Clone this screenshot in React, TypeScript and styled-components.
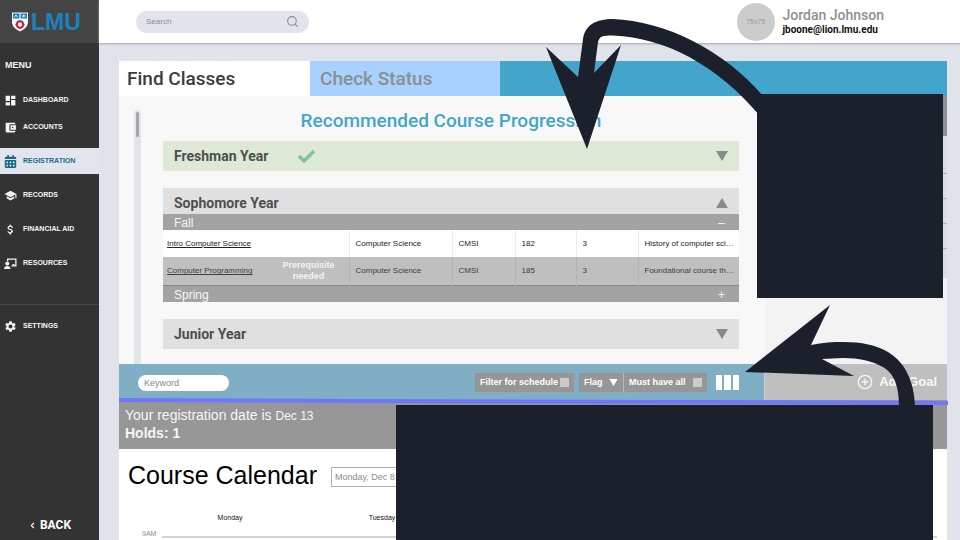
import React, { useState } from "react";
import styled, { createGlobalStyle } from "styled-components";
import { Search, CirclePlus, ChevronLeft } from "lucide-react";
import {
  MdDashboard,
  MdAccountBalanceWallet,
  MdSchool,
  MdAttachMoney,
  MdSettings,
} from "react-icons/md";
import { FaCalendarAlt } from "react-icons/fa";

const sans = '"Liberation Sans", Arial, sans-serif';
const heading = 'Roboto, "Liberation Sans", sans-serif';
const ink = "#1b202c";

const GlobalStyle = createGlobalStyle`
  *, *::before, *::after { box-sizing: border-box; }
  body { margin: 0; font-family: ${sans}; background: #e0e4ea; overflow: hidden; }
  button, input, select { font-family: inherit; margin: 0; border: 0; padding: 0; }
  button { cursor: pointer; background: none; color: inherit; }
  h1, h2, p, ul { margin: 0; padding: 0; }
  ul { list-style: none; }
`;

const Page = styled.div`
  position: relative;
  display: grid;
  grid-template-columns: 99px minmax(0, 1fr);
  height: 100vh;
  overflow: hidden;
`;

/* Sidebar */

const Sidebar = styled.aside`
  display: flex;
  flex-direction: column;
  background: #333333;
  color: #f2f2f2;
`;

const Brand = styled.a`
  display: flex;
  align-items: center;
  gap: 2px;
  height: 43px;
  padding-left: 11px;
  background: #444444;
  color: #1c81bd;
  font-size: 23px;
  line-height: 24px;
  font-weight: 700;
  text-decoration: none;
`;

const MenuLabel = styled.p`
  padding: 16px 5px;
  font-size: 9px;
  line-height: 12px;
  font-weight: 700;
`;

const NavGroup = styled.ul`
  display: flex;
  flex-direction: column;
  gap: ${(p: { $gap: number }) => p.$gap}px;
  margin-bottom: 8px;
`;

const NavLink = styled.a<{ $active?: boolean }>`
  display: flex;
  align-items: center;
  gap: 6px;
  height: 26px;
  padding-left: 4px;
  background: ${(p) => (p.$active ? "#e2e6ec" : "transparent")};
  color: ${(p) => (p.$active ? "#176a8c" : "#f5f5f5")};
  font-size: 7px;
  line-height: 10px;
  font-weight: 700;
  text-decoration: none;
  white-space: nowrap;
  svg { width: 13px; height: 13px; flex: none; }
`;

const NavDivider = styled.hr`
  width: 100%;
  height: 1px;
  margin: 28px 0 8px;
  border: 0;
  background: #484848;
`;

const BackLink = styled.a`
  display: flex;
  align-items: center;
  justify-content: center;
  gap: 3px;
  margin-top: auto;
  padding-bottom: 8px;
  color: #ffffff;
  font-family: ${heading};
  font-size: 12px;
  line-height: 14px;
  font-weight: 700;
  text-decoration: none;
`;

/* Top bar */

const Content = styled.div`
  display: flex;
  flex-direction: column;
  min-width: 0;
  min-height: 0;
`;

const TopBar = styled.header`
  display: flex;
  flex: none;
  align-items: center;
  justify-content: space-between;
  height: 43px;
  padding: 0 76px 0 37px;
  background: #ffffff;
  box-shadow: 0 1px 2px #a3a5a9;
`;

const SearchBox = styled.label`
  display: flex;
  align-items: center;
  width: 173px;
  height: 22px;
  padding: 0 10px;
  border-radius: 11px;
  background: #e1e4ea;
  color: #8b8d91;
`;

const SearchInput = styled.input`
  flex: 1;
  min-width: 0;
  background: transparent;
  font-size: 8px;
  line-height: 12px;
  outline: 0;
  &::placeholder { color: #8b8d91; opacity: 1; }
`;

const Profile = styled.div`
  display: flex;
  align-items: center;
  gap: 8px;
`;

const Avatar = styled.div`
  display: grid;
  place-items: center;
  width: 38px;
  height: 38px;
  border-radius: 50%;
  background: #cccccc;
  color: #9b9b9b;
  font-size: 7px;
`;

const ProfileName = styled.p`
  color: #8d9094;
  font-family: ${heading};
  font-size: 14px;
  line-height: 16px;
  font-weight: 500;
`;

const ProfileMail = styled.p`
  color: #111111;
  font-family: ${heading};
  font-size: 10px;
  line-height: 13px;
  font-weight: 700;
`;

/* Main panel */

const Main = styled.main`
  display: flex;
  flex: 1;
  flex-direction: column;
  min-height: 0;
  padding: 18px 13px 0 20px;
`;

const Tabs = styled.div`
  display: flex;
  flex: none;
  height: 35px;
  background: #43a5cb;
`;

const Tab = styled.button<{ $selected?: boolean }>`
  width: ${(p) => (p.$selected ? 191 : 190)}px;
  padding-left: ${(p) => (p.$selected ? 8 : 10)}px;
  background: ${(p) => (p.$selected ? "#ffffff" : "#a8d1ff")};
  color: ${(p) => (p.$selected ? "#3b3b3b" : "#8a8f93")};
  font-family: ${heading};
  font-size: 19px;
  line-height: 22px;
  font-weight: 500;
  text-align: left;
`;

const Columns = styled.div`
  display: grid;
  flex: none;
  grid-template-columns: minmax(0, 1fr) 182px;
`;

const Finder = styled.section`
  display: flex;
  gap: 22px;
  height: 268px;
  padding: 14px 26px 0 15px;
  background: #f8f8f8;
`;

const ScrollTrack = styled.div`
  width: 7px;
  padding: 2px;
  border-radius: 4px 4px 0 0;
  background: #e1e5e9;
`;

const ScrollThumb = styled.div`
  height: 25px;
  border-radius: 2px;
  background: #a5a7aa;
`;

const Progression = styled.div`
  flex: 1;
  min-width: 0;
`;

const Title = styled.h1`
  margin-bottom: 9px;
  color: #43a5cb;
  font-family: ${heading};
  font-size: 19px;
  line-height: 22px;
  font-weight: 500;
  text-align: center;
`;

const Year = styled.section`
  margin-bottom: 17px;
`;

const YearHeader = styled.button<{ $done?: boolean; $open?: boolean }>`
  display: flex;
  align-items: center;
  width: 100%;
  height: ${(p) => (p.$open ? 26 : 30)}px;
  padding: ${(p) => (p.$open ? "3px 11px 0" : "0 11px")};
  background: ${(p) => (p.$done ? "#dde8d6" : "#e0e0e0")};
  color: #4d4f4e;
  font-family: ${heading};
  font-size: 14px;
  line-height: 18px;
  font-weight: 700;
  text-align: left;
  svg:last-child { margin-left: auto; }
`;

const DoneMark = styled.svg`
  margin-left: 29px;
`;

const Term = styled.button`
  display: flex;
  align-items: center;
  justify-content: space-between;
  width: 100%;
  height: 16px;
  padding: 2px 14px 0 11px;
  background: #a3a3a3;
  color: #f6f6f6;
  font-size: 12px;
  line-height: 14px;
`;

const CourseTable = styled.table`
  width: 100%;
  border-collapse: collapse;
  table-layout: fixed;
`;

const Col = styled.col<{ $w?: number }>`
  width: ${(p) => (p.$w ? `${p.$w}px` : "auto")};
`;

const CourseRow = styled.tr<{ $locked?: boolean }>`
  height: ${(p) => (p.$locked ? 28 : 27)}px;
  background: ${(p) => (p.$locked ? "#bfbfbf" : "#ffffff")};
  border-bottom: ${(p) => (p.$locked ? "1px solid #858585" : "0")};
  color: ${(p) => (p.$locked ? "#3e3e3e" : "#222222")};
  td { border-right-color: ${(p) => (p.$locked ? "#b3b3b3" : "#ededed")}; }
`;

const Cell = styled.td`
  padding: 0 0 0 6px;
  border-right: 1px solid;
  font-size: 8px;
  line-height: 11px;
  overflow: hidden;
  white-space: nowrap;
  &:first-child { padding-left: 4px; }
  &:last-child { border-right: 0; }
`;

const CourseName = styled.div`
  display: flex;
  align-items: center;
  justify-content: space-between;
  padding-right: 13px;
  a { color: inherit; }
`;

const Prerequisite = styled.span`
  width: 54px;
  color: #f7f1f3;
  font-size: 9px;
  line-height: 11px;
  font-weight: 700;
  text-align: center;
  white-space: normal;
`;

const Toolbar = styled.div`
  display: flex;
  align-items: center;
  height: 36px;
  padding: 0 25px 0 19px;
  background: #80afc5;
  border-right: 1px solid #c9cdd0;
`;

const Keyword = styled.input`
  width: 91px;
  height: 16px;
  margin: 1px auto 0 0;
  padding: 0 6px;
  border-radius: 8px;
  background: #ffffff;
  font-size: 9px;
  &::placeholder { color: #85888b; opacity: 1; }
`;

const FilterChip = styled.label`
  display: flex;
  align-items: center;
  justify-content: space-between;
  height: 19px;
  width: ${(p: { $w: number }) => p.$w}px;
  padding: 0 5px;
  background: #969696;
  color: #ffffff;
  font-size: 9px;
  line-height: 12px;
  font-weight: 700;
  white-space: nowrap;
`;

const ChipPair = styled.div`
  display: flex;
  margin: 0 9px 0 5px;
  label + label { border-left: 1px solid #b9b9b9; }
`;

const FlagSelect = styled.select`
  width: 22px;
  appearance: none;
  background: transparent;
  color: inherit;
  font-size: 9px;
  font-weight: 700;
`;

const Tick = styled.input`
  flex: none;
  appearance: none;
  width: 9px;
  height: 9px;
  margin: 0;
  background: #cbcbcb;
  &:checked { background: #ffffff; }
`;

const ColumnToggle = styled.button`
  display: flex;
  gap: 2px;
  width: 23px;
  height: 15px;
  span { flex: 1; background: #ffffff; }
`;

/* Goals */

const Goals = styled.aside`
  display: flex;
  flex-direction: column;
  background: #f3f3f3;
`;

const GoalsHead = styled.div`
  height: 40px;
  background: #8f8f8f;
`;

const GoalRow = styled.li<{ $tall?: boolean }>`
  height: ${(p) => (p.$tall ? 38 : 25)}px;
  background: #dedede;
  border-bottom: 1px solid #b3b3b3;
  &:last-child { height: 29px; border: 0; }
`;

const AddGoal = styled.button`
  display: flex;
  align-items: center;
  justify-content: flex-end;
  gap: 6px;
  height: 36px;
  padding-right: 10px;
  background: #bfbfbf;
  color: #f7f7f7;
  font-size: 13px;
  line-height: 16px;
  font-weight: 700;
`;

/* Registration status and calendar */

const Notice = styled.section`
  flex: none;
  height: 49px;
  padding: 7px 6px;
  background: #979797;
  color: #f6f6f6;
  font-size: 14px;
  line-height: 17px;
  small { font-size: 12px; }
`;

const Calendar = styled.section`
  flex: 1;
  background: #ffffff;
`;

const CalendarHead = styled.div`
  display: flex;
  align-items: center;
  gap: 14px;
  padding: 11px 9px 0;
`;

const CalendarTitle = styled.h2`
  color: #000000;
  font-size: 25px;
  line-height: 31px;
  font-weight: 400;
`;

const DateInput = styled.input`
  width: 120px;
  height: 20px;
  margin-top: 3px;
  padding: 0 3px;
  border: 1px solid #b0b0b0;
  color: #8a8a8a;
  font-size: 9px;
`;

const Days = styled.div`
  display: grid;
  grid-template-columns: repeat(5, 1fr);
  padding: 21px 33px 0 35px;
  color: #111111;
  font-size: 7px;
  line-height: 11px;
  text-align: center;
`;

const Hour = styled.div`
  display: flex;
  align-items: center;
  gap: 6px;
  padding: 6px 10px 0 23px;
  color: #8c8c8c;
  font-size: 7px;
  line-height: 10px;
  hr { flex: 1; height: 2px; margin: 5px 0 0; border: 0; background: #d2d2d2; }
`;

/* Callouts drawn over the page */

const Callout = styled.div<{ $x: number; $y: number; $w: number; $h: number }>`
  position: absolute;
  left: ${(p) => p.$x}px;
  top: ${(p) => p.$y}px;
  width: ${(p) => p.$w}px;
  height: ${(p) => p.$h}px;
  background: ${ink};
`;

const Annotations = styled.svg`
  position: absolute;
  left: 0;
  top: 0;
  pointer-events: none;
`;

function Shield() {
  return (
    <svg width="18" height="20" viewBox="0 0 18 20" aria-hidden="true">
      <path d="M1 0.5H17V10C17 15 12.5 17.5 9 19.5C5.500 17.500 1 15 1 10Z" fill="#f3f6fa" />
      <path d="M2 1.500H8.400V6.500H2ZM9.600 1.500H16V6.500H9.600Z" fill="#1c81bd" />
      <path d="M3.500 5L5 3L6.500 5M11 4H14.500M12.700 2.500V5.500" stroke="#e7eff7" fill="none" />
      <circle cx="9" cy="12.500" r="3.200" fill="none" stroke="#bd2548" strokeWidth="2" />
      <path d="M9 8V10M9 15V17M4.500 12.500H6.500M11.500 12.500H13.500M6 9.500L7.200 10.700M12 9.500L10.800 10.700M6 15.500L7.200 14.300M12 15.500L10.800 14.300" stroke="#bd2548" strokeWidth="1.400" />
    </svg>
  );
}

function Presenter() {
  return (
    <svg viewBox="0 0 26 24" fill="currentColor" aria-hidden="true">
      <path d="M6 2H25V18H15V15.500H22.500V4.500H8.500V7H6Z" />
      <path d="M17 13H21V16H17Z" />
      <circle cx="6.500" cy="12" r="4" />
      <path d="M0 23C0 19 3 17 6.500 17S13 19 13 23Z" />
    </svg>
  );
}

function Triangle({ up, size = 12, color = "#8a8a8a" }: { up?: boolean; size?: number; color?: string }) {
  return (
    <svg width={size} height={size - 2} viewBox="0 0 12 10" fill={color} aria-hidden="true">
      <path d={up ? "M0 10L6 0L12 10Z" : "M0 0H12L6 10Z"} />
    </svg>
  );
}

const courses = [
  { name: "Intro Computer Science", dept: "Computer Science", code: "CMSI", num: "182", units: "3", about: "History of computer sci…", locked: false },
  { name: "Computer Programming", dept: "Computer Science", code: "CMSI", num: "185", units: "3", about: "Foundational course th…", locked: true },
];

const lowerNav = [
  { label: "REGISTRATION", icon: <FaCalendarAlt />, active: true },
  { label: "RECORDS", icon: <MdSchool /> },
  { label: "FINANCIAL AID", icon: <MdAttachMoney /> },
  { label: "RESOURCES", icon: <Presenter /> },
];

export default function App() {
  const [tab, setTab] = useState("find");
  return (
    <Page>
      <GlobalStyle />
      <Sidebar>
        <Brand href="#home"><Shield />LMU</Brand>
        <nav>
          <MenuLabel>MENU</MenuLabel>
          <NavGroup $gap={1}>
            <li><NavLink href="#dashboard"><MdDashboard />DASHBOARD</NavLink></li>
            <li><NavLink href="#accounts"><MdAccountBalanceWallet />ACCOUNTS</NavLink></li>
          </NavGroup>
          <NavGroup $gap={8}>
            {lowerNav.map((n) => (
              <li key={n.label}>
                <NavLink href={`#${n.label.toLowerCase()}`} $active={n.active}>{n.icon}{n.label}</NavLink>
              </li>
            ))}
          </NavGroup>
          <NavDivider />
          <NavLink href="#settings"><MdSettings />SETTINGS</NavLink>
        </nav>
        <BackLink href="#back"><ChevronLeft size={9} strokeWidth={3} />BACK</BackLink>
      </Sidebar>

      <Content>
        <TopBar>
          <SearchBox>
            <SearchInput type="search" placeholder="Search" aria-label="Search" />
            <Search size={13} strokeWidth={2} />
          </SearchBox>
          <Profile>
            <Avatar>75x75</Avatar>
            <div>
              <ProfileName>Jordan Johnson</ProfileName>
              <ProfileMail>jboone@lion.lmu.edu</ProfileMail>
            </div>
          </Profile>
        </TopBar>

        <Main>
          <Tabs role="tablist">
            <Tab role="tab" $selected={tab === "find"} onClick={() => setTab("find")}>Find Classes</Tab>
            <Tab role="tab" $selected={tab === "status"} onClick={() => setTab("status")}>Check Status</Tab>
          </Tabs>

          <Columns>
            <Finder>
              <ScrollTrack><ScrollThumb /></ScrollTrack>
              <Progression>
                <Title>Recommended Course Progression</Title>
                <Year>
                  <YearHeader $done>
                    Freshman Year
                    <DoneMark width="19" height="14" viewBox="0 0 19 14" aria-hidden="true">
                      <path d="M2 7L7 12L17 2" fill="none" stroke="#7fc39f" strokeWidth="3.600" />
                    </DoneMark>
                    <Triangle />
                  </YearHeader>
                </Year>
                <Year>
                  <YearHeader $open>Sophomore Year<Triangle up /></YearHeader>
                  <Term>Fall<span>–</span></Term>
                  <CourseTable>
                    <colgroup><Col /><Col $w={103} /><Col $w={63} /><Col $w={61} /><Col $w={62} /><Col $w={101} /></colgroup>
                    <tbody>
                      {courses.map((c) => (
                        <CourseRow key={c.name} $locked={c.locked}>
                          <Cell>
                            <CourseName>
                              <a href="#course">{c.name}</a>
                              {c.locked && <Prerequisite>Prerequisite needed</Prerequisite>}
                            </CourseName>
                          </Cell>
                          <Cell>{c.dept}</Cell>
                          <Cell>{c.code}</Cell>
                          <Cell>{c.num}</Cell>
                          <Cell>{c.units}</Cell>
                          <Cell>{c.about}</Cell>
                        </CourseRow>
                      ))}
                    </tbody>
                  </CourseTable>
                  <Term>Spring<span>+</span></Term>
                </Year>
                <YearHeader>Junior Year<Triangle /></YearHeader>
              </Progression>
            </Finder>
            <Goals>
              <GoalsHead />
              <ul>
                <GoalRow $tall /><GoalRow /><GoalRow /><GoalRow /><GoalRow />
              </ul>
            </Goals>
            <Toolbar>
              <Keyword placeholder="Keyword" aria-label="Keyword" />
              <FilterChip $w={99}>Filter for schedule<Tick type="checkbox" /></FilterChip>
              <ChipPair>
                <FilterChip $w={44}>
                  <FlagSelect aria-label="Flag"><option>Flag</option></FlagSelect>
                  <Triangle size={9} color="#ffffff" />
                </FilterChip>
                <FilterChip $w={84}>Must have all<Tick type="checkbox" /></FilterChip>
              </ChipPair>
              <ColumnToggle aria-label="Columns"><span /><span /><span /></ColumnToggle>
            </Toolbar>
            <AddGoal><CirclePlus size={16} strokeWidth={2} />Add Goal</AddGoal>
          </Columns>

          <Notice>
            <p>Your registration date is <small>Dec 13</small></p>
            <p><strong>Holds: 1</strong></p>
          </Notice>

          <Calendar>
            <CalendarHead>
              <CalendarTitle>Course Calendar</CalendarTitle>
              <DateInput aria-label="Date" defaultValue="Monday, Dec 8" />
            </CalendarHead>
            <Days><span>Monday</span><span>Tuesday</span></Days>
            <Hour>9AM<hr /></Hour>
          </Calendar>
        </Main>
      </Content>

      <Annotations width="960" height="540" viewBox="0 0 960 540" aria-hidden="true">
        <path d="M119 400L948 403" stroke="#6f77ff" strokeWidth="4" />
      </Annotations>
      <Callout $x={757} $y={94} $w={186} $h={204} />
      <Callout $x={396} $y={405} $w={537} $h={135} />
      <Annotations width="960" height="540" viewBox="0 0 960 540" fill={ink} aria-hidden="true">
        <path d="M578 77L583 39C585 25 596 19 613 19C665 21 724 50 763 96L760 116C717 65 666 38 613 35.500C602 35.500 600 36 598 42L594 73L621 45L587 149L546 47Z" />
        <path d="M745 372L830 305L811 345C823 342.500 833 342 843 342C862 342 876 345 888 352C906 363 914 382 915 406H899C899 384 893 373 883 367C872 361 859 358 843 358L822 359L854 376Z" />
      </Annotations>
    </Page>
  );
}
